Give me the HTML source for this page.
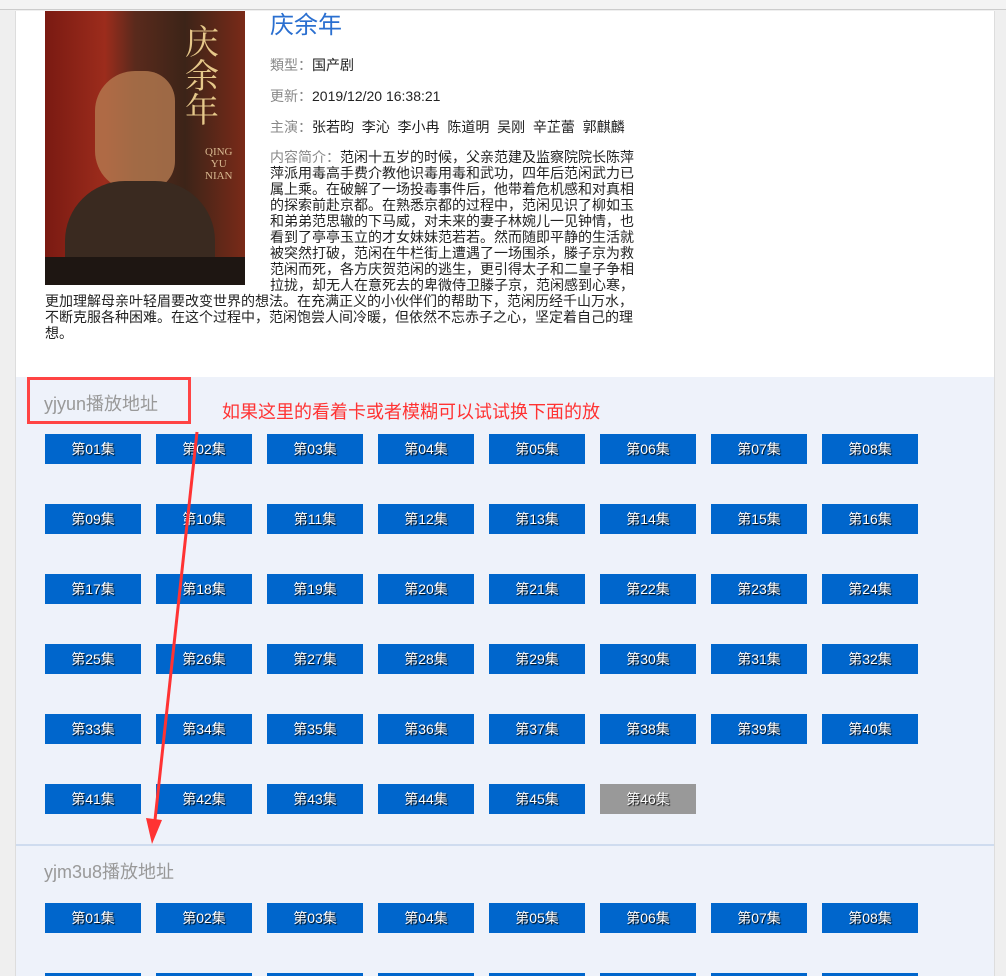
<!DOCTYPE html>
<html><head><meta charset="utf-8"><style>
*{margin:0;padding:0;box-sizing:border-box}
html,body{width:1006px;height:976px;overflow:hidden}
body{background:#efefef;font-family:"Liberation Sans","Microsoft YaHei","Noto Sans CJK SC",sans-serif;position:relative}
.top{position:absolute;left:0;top:0;width:1006px;height:10px;background:#f3f3f3;border-bottom:1px solid #ccc}
.main{position:absolute;left:15px;top:11px;width:980px;height:965px;background:#fff;border-left:1px solid #ddd;border-right:1px solid #ddd}
.poster{position:absolute;left:45px;top:11px;width:200px;height:274px;background:linear-gradient(90deg,#7a1a12 0%,#9c2c1c 30%,#5a2a1c 45%,#3c2418 70%,#7a2a18 100%);overflow:hidden}
.poster .face{position:absolute;left:50px;top:60px;width:80px;height:120px;border-radius:40px 30px 30px 40px;background:#b47a50;opacity:.8}
.poster .body{position:absolute;left:20px;top:170px;width:150px;height:110px;border-radius:60px 60px 0 0;background:#3a2a20}
.poster .t{position:absolute;left:140px;top:12px;color:#e6c88a;font-size:34px;line-height:34px;width:40px;font-family:"Noto Serif CJK SC",serif}
.poster .q{position:absolute;left:160px;top:135px;color:#d8b890;font-size:11px;line-height:12px;text-align:center;font-family:"Liberation Serif",serif}
.poster .bot{position:absolute;left:0;top:246px;width:200px;height:28px;background:#1e1612}
.title{position:absolute;left:270px;top:5px;font-size:24px;color:#2a6fd0}
.f{position:absolute;left:270px;font-size:14px;color:#222;white-space:nowrap}
.f span{color:#888}
.d{position:absolute;font-size:14px;color:#222;white-space:nowrap;line-height:16px}
.sec{position:absolute;left:16px;width:978px;background:#eef2fa}
.h{position:absolute;font-size:18px;color:#999}
.b{position:absolute;width:96px;height:30px;background:#0066cc;color:#fff;font-size:14px;line-height:30px;text-align:center;text-shadow:1px 1px 1px #000}
.b.g{background:#999}
</style></head><body>
<div class="top"></div>
<div class="main"></div>
<div class="poster"><div class="face"></div><div class="body"></div><div class="t">庆余年</div><div class="q">QING<br>YU<br>NIAN</div><div class="bot"></div></div>
<div class="title">庆余年</div>
<div class="f" style="top:55px"><span>類型：</span>国产剧</div>
<div class="f" style="top:86px"><span>更新：</span>2019/12/20 16:38:21</div>
<div class="f" style="top:117px"><span>主演：</span>张若昀&nbsp; 李沁&nbsp; 李小冉&nbsp; 陈道明&nbsp; 吴刚&nbsp; 辛芷蕾&nbsp; 郭麒麟</div>
<div class="d" style="left:270px;top:149px"><span style="color:#888">内容简介：</span>范闲十五岁的时候，父亲范建及监察院院长陈萍<br>萍派用毒高手费介教他识毒用毒和武功，四年后范闲武力已<br>属上乘。在破解了一场投毒事件后，他带着危机感和对真相<br>的探索前赴京都。在熟悉京都的过程中，范闲见识了柳如玉<br>和弟弟范思辙的下马威，对未来的妻子林婉儿一见钟情，也<br>看到了亭亭玉立的才女妹妹范若若。然而随即平静的生活就<br>被突然打破，范闲在牛栏街上遭遇了一场围杀，滕子京为救<br>范闲而死，各方庆贺范闲的逃生，更引得太子和二皇子争相<br>拉拢，却无人在意死去的卑微侍卫滕子京，范闲感到心寒，</div>
<div class="d" style="left:45px;top:293px">更加理解母亲叶轻眉要改变世界的想法。在充满正义的小伙伴们的帮助下，范闲历经千山万水，<br>不断克服各种困难。在这个过程中，范闲饱尝人间冷暖，但依然不忘赤子之心，坚定着自己的理<br>想。</div>
<div class="sec" style="top:377px;height:467px"></div>
<div class="sec" style="top:844px;height:132px;border-top:2px solid #cfdcef"></div>
<div class="h" style="left:44px;top:390px">yjyun播放地址</div>
<div style="position:absolute;left:27px;top:377px;width:164px;height:47px;border:3px solid #f44"></div>
<div style="position:absolute;left:222px;top:398px;font-size:18px;color:#f33">如果这里的看着卡或者模糊可以试试换下面的放</div>
<div class="h" style="left:44px;top:858px">yjm3u8播放地址</div>
<div id="btns"></div>
<script>
var h='';
for(var i=1;i<=46;i++){var r=Math.floor((i-1)/8),c=(i-1)%8;h+='<div class="b'+(i==46?' g':'')+'" style="left:'+(45+c*111)+'px;top:'+(434+r*70)+'px">第'+(i<10?'0':'')+i+'集</div>';}
for(var i=1;i<=16;i++){var r=Math.floor((i-1)/8),c=(i-1)%8;h+='<div class="b" style="left:'+(45+c*111)+'px;top:'+(903+r*70)+'px">第'+(i<10?'0':'')+i+'集</div>';}
document.getElementById('btns').innerHTML=h;
</script>
<svg style="position:absolute;left:0;top:0" width="1006" height="976"><line x1="197" y1="432" x2="155" y2="820" stroke="#f33" stroke-width="3"/><polygon points="146,818 162,820 152,844" fill="#f33"/></svg>
</body></html>
